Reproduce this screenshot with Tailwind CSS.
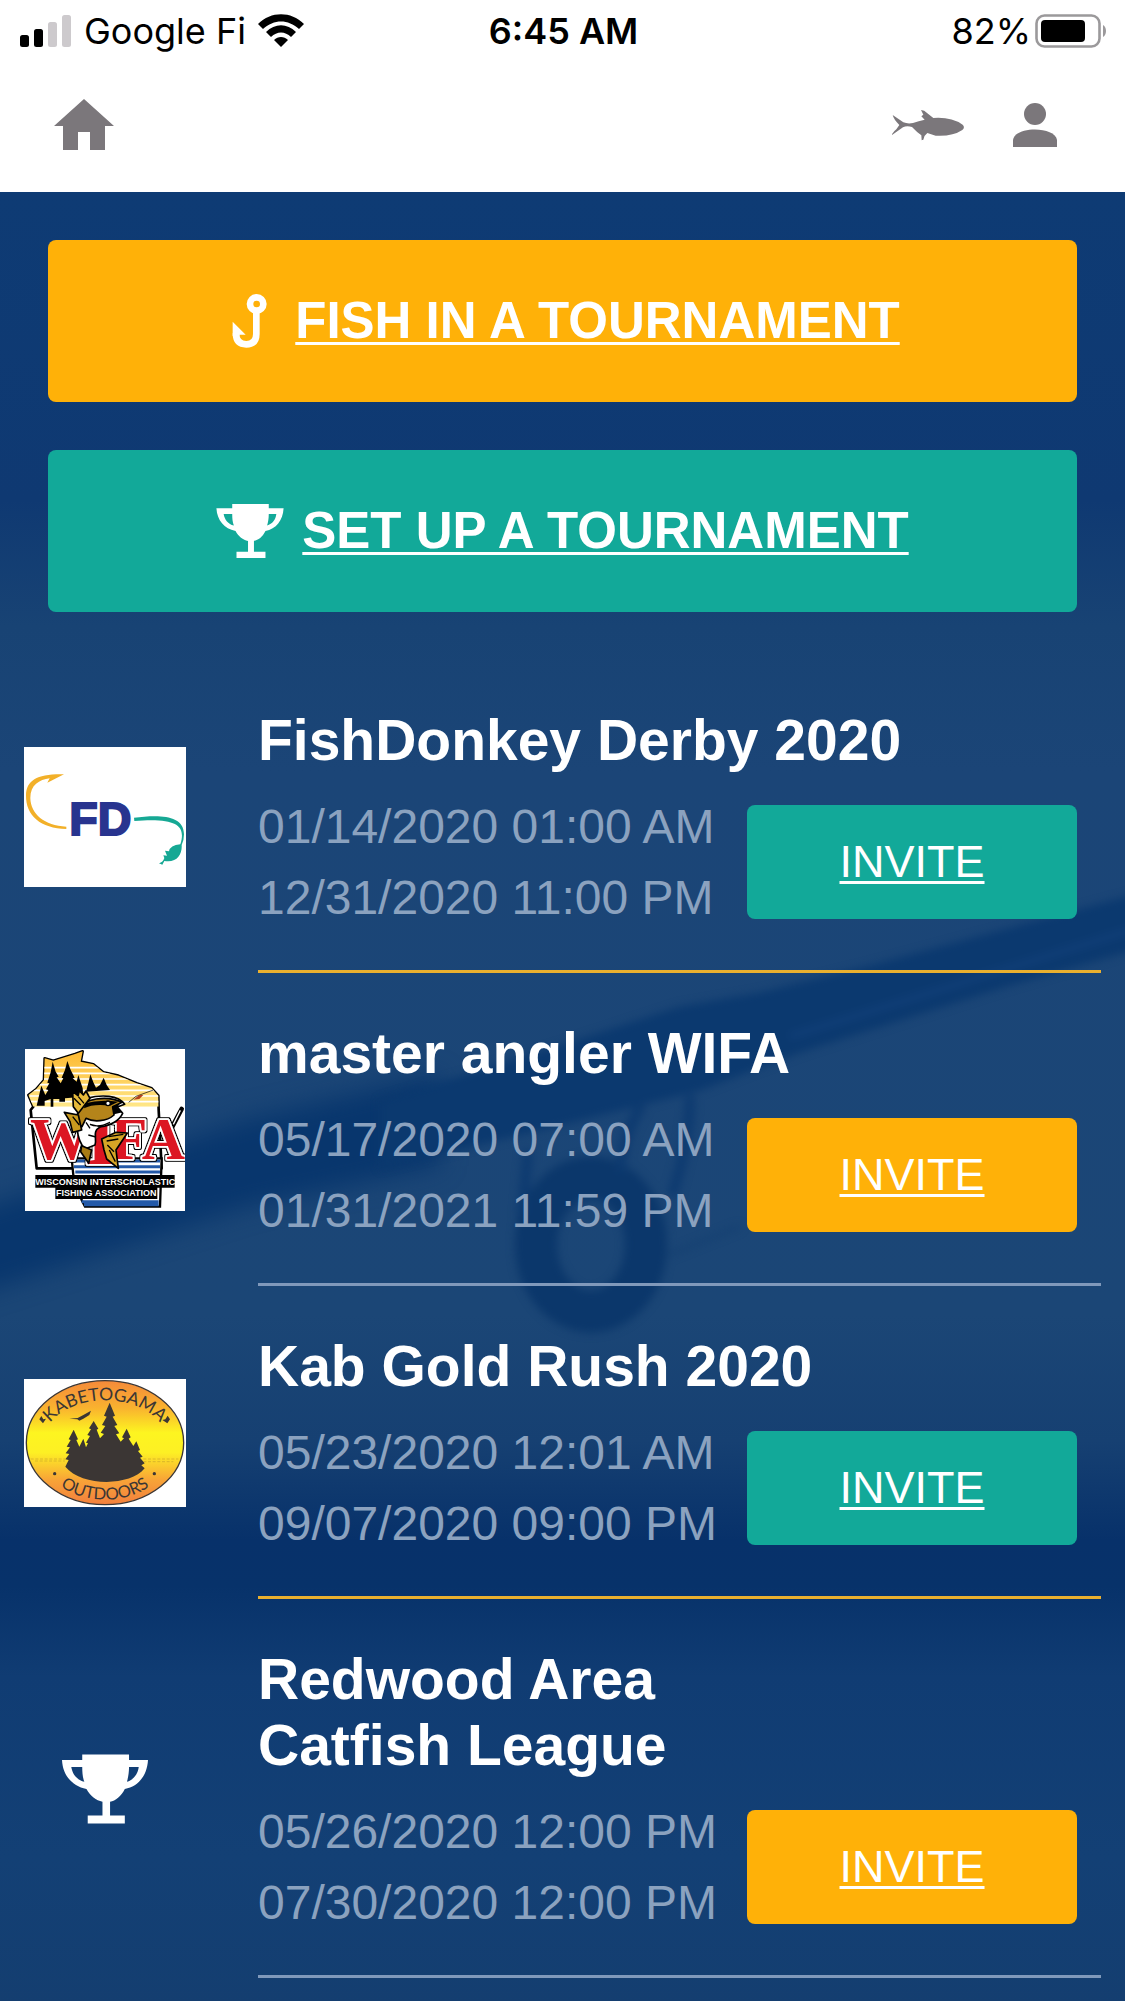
<!DOCTYPE html>
<html lang="en">
<head>
  <meta charset="UTF-8">
  <meta name="viewport" content="width=device-width, initial-scale=1.0">
  <title>Tournaments</title>
  <script src="https://cdn.jsdelivr.net/npm/@tailwindcss/browser@4"></script>
</head>
<body class="min-h-screen bg-[#123f74] font-['Liberation_Sans',Arial,sans-serif]">

  <!-- Shared icons -->
  <svg class="hidden" aria-hidden="true">
    <symbol id="trophy" viewBox="0 0 204 164">
      <path fill="currentColor" fill-rule="evenodd" d="M48 0H159V13H204C202 50 181 76 149 82C140 100 127 110 114 112V145H149V164H61V145H96V112C81 109 67 99 58 82C24 75 2 50 0 13H48ZM22 30C25 48 36 61 53 65C49 55 48 43 48 30ZM182 30H159C159 43 157 55 154 65C170 60 180 47 182 30Z"/>
    </symbol>
  </svg>

  <header class="bg-white">
    <!-- Status bar -->
    <div class="grid grid-cols-3 items-center h-[62px] pl-5 pr-[18px] font-['Inter',sans-serif] text-[36px] leading-none text-black">
      <div class="flex items-center gap-3 whitespace-nowrap">
        <svg class="w-[52px] h-8 shrink-0" viewBox="0 0 52 32">
          <rect x="0" y="20" width="9" height="12" rx="2.5"/>
          <rect x="14" y="14" width="9" height="18" rx="2.5"/>
          <rect x="28" y="7" width="9" height="25" rx="2.5" fill="#cdcacd"/>
          <rect x="42" y="0" width="9" height="32" rx="2.5" fill="#cdcacd"/>
        </svg>
        <span>Google Fi</span>
        <svg class="w-[46px] h-[34px] shrink-0" viewBox="0 0 46 34">
          <path d="M0 10C13-3 33-3 46 10L41 15C30 5 16 5 5 15Z"/>
          <path d="M8 18C17 9 29 9 38 18L33 23C27 17 19 17 13 23Z"/>
          <path d="M16 26C20 22 26 22 30 26L23 33Z"/>
        </svg>
      </div>
      <div class="text-center font-semibold">6:45 AM</div>
      <div class="flex items-center justify-end gap-1">
        <span>82%</span>
        <svg class="w-[72px] h-[34px] shrink-0" viewBox="0 0 72 34">
          <rect x="1.5" y="1.5" width="63" height="31" rx="8" fill="none" stroke="#9b999b" stroke-width="2.6"/>
          <rect x="6" y="6" width="44" height="22" rx="4"/>
          <path d="M68 11C72 13 72 21 68 23Z" fill="#9b999b"/>
        </svg>
      </div>
    </div>

    <nav class="flex items-center h-[130px] pl-[54px] pr-[68px] pb-1 text-[#7b777b]">
      <a href="#" aria-label="Home">
        <svg class="w-[60px] h-[52px]" viewBox="0 0 60 52" fill="currentColor">
          <path d="M30 0L60 27H51V51H36V33H24V51H9V27H0Z"/>
        </svg>
      </a>
      <a href="#" aria-label="Catches" class="ml-auto mr-12">
        <svg class="w-[74px] h-8" viewBox="122 90 218 96" fill="currentColor">
          <path d="M125 108L157 130Q170 135 186 132Q203 126 221 122L211 112L217 107L210 93Q220 93 229 103L247 117Q300 113 335 137Q343 145 334 153Q304 173 254 170L229 162Q220 168 217 182L212 184L211 169Q198 160 183 144Q167 139 156 145L123 168Q122 164 136 151L145 138Q128 121 125 108Z"/>
        </svg>
      </a>
      <a href="#" aria-label="Profile">
        <svg class="w-11 h-11" viewBox="0 0 44 44" fill="currentColor">
          <circle cx="22" cy="11" r="11"/>
          <path d="M0 44V37C2 23 42 23 44 37V44Z"/>
        </svg>
      </a>
    </nav>
  </header>

  <main class="relative isolate pb-6">
    <!-- Fishing rod backdrop -->
    <svg class="absolute inset-0 -z-10 w-full h-full" viewBox="0 192 1125 1809" preserveAspectRatio="none" aria-hidden="true">
      <defs>
        <linearGradient id="water" x1="0" y1="0" x2="0" y2="1">
          <stop offset="0" stop-color="#0e3b74"/>
          <stop offset="0.17" stop-color="#0f3972"/>
          <stop offset="0.24" stop-color="#184374"/>
          <stop offset="0.32" stop-color="#1b4577"/>
          <stop offset="0.62" stop-color="#1b4676"/>
          <stop offset="0.69" stop-color="#164072"/>
          <stop offset="0.745" stop-color="#07316a"/>
          <stop offset="0.77" stop-color="#07326a"/>
          <stop offset="0.82" stop-color="#103c73"/>
          <stop offset="0.92" stop-color="#134075"/>
          <stop offset="1" stop-color="#143e70"/>
        </linearGradient>
        <filter id="soft" x="-10%" y="-10%" width="120%" height="120%" color-interpolation-filters="sRGB"><feGaussianBlur stdDeviation="4"/></filter>
        <filter id="softer" x="-10%" y="-30%" width="120%" height="160%" color-interpolation-filters="sRGB"><feGaussianBlur stdDeviation="12"/></filter>
      </defs>
      <rect x="0" y="192" width="1125" height="1809" fill="url(#water)"/>
      <path d="M-60 1222L250 1118L440 1074V1165L250 1205L-60 1305Z" fill="#08366d" filter="url(#softer)"/>
      <g filter="url(#soft)">
        <path d="M380 1100L560 1045L680 1006L760 992L870 965L1000 930L1150 890V945L1010 985L800 1052L700 1090L560 1125L380 1168Z" fill="#0b396f"/>
        <path d="M790 1036L1130 930" stroke="#12407a" stroke-width="5"/>
        <ellipse cx="591" cy="1244" rx="55" ry="67" fill="none" stroke="#0b376b" stroke-width="42"/>
        <path d="M528 1150L522 1215M642 1105Q624 1130 620 1172M690 1095Q690 1140 672 1195" fill="none" stroke="#0d3a70" stroke-width="10"/>
        <path d="M664 1256L740 1226" stroke="#123e70" stroke-width="3"/>
      </g>
    </svg>

    <div class="flex flex-col gap-12 p-12">
      <a href="#" class="flex items-center justify-center gap-5 h-[162px] rounded-lg bg-[#ffb108] text-white text-[51px] font-bold">
        <svg class="w-[50px] h-[54px]" viewBox="76 192 150 162" fill="none" stroke="currentColor">
          <circle cx="171" cy="222" r="20" stroke-width="20"/>
          <path d="M170 245V312Q170 343 140 343Q109 343 109 310" stroke-width="20"/>
          <path d="M99 275L138 314H119V325L99 318Z" fill="currentColor" stroke="none"/>
        </svg>
        <span class="underline decoration-3 underline-offset-4">FISH IN A TOURNAMENT</span>
      </a>
      <a href="#" class="flex items-center justify-center gap-[18px] h-[162px] rounded-lg bg-[#12a999] text-white text-[51px] font-bold">
        <svg class="w-[68px] h-[54px]"><use href="#trophy"/></svg>
        <span class="underline decoration-3 underline-offset-4">SET UP A TOURNAMENT</span>
      </a>
    </div>

    <ul class="px-6">
      <li class="flex items-center gap-[72px]">
        <div class="w-[162px] shrink-0">
          <svg class="w-[162px] h-[140px] bg-white" viewBox="42 51 486 420" role="img" aria-label="FishDonkey">
            <path d="M162 133L112 158L119 145C88 149 61 165 61 204C62 252 103 287 169 290V297C92 296 47 257 48 196C49 150 83 131 162 133Z" fill="#f2b029"/>
            <text x="178" y="316" font-family="Liberation Sans" font-weight="bold" font-size="140" fill="#28348f" stroke="#28348f" stroke-width="6">FD</text>
            <path d="M372 263C440 255 522 251 522 313Q522 331 515 345C517 372 501 400 463 393L457 404L447 400Q459 397 463 384L460 376L471 377L465 362L477 364Q480 346 511 343C529 287 500 263 373 273Z" fill="#16a894"/>
          </svg>
        </div>
        <div class="grow pt-[47px] pb-[37px] pr-6 border-b-3 border-[#eab02f]">
          <h2 class="text-white text-[57px] leading-[66px] font-bold">FishDonkey Derby 2020</h2>
          <div class="flex items-center justify-between mt-[18px]">
            <p class="text-[#8ba2bf] text-[48px] leading-[71px] whitespace-nowrap">01/14/2020 01:00 AM<br>12/31/2020 11:00 PM</p>
            <button type="button" class="w-[330px] h-[114px] rounded-lg bg-[#12a999] text-white text-[45px] underline decoration-3 underline-offset-4">INVITE</button>
          </div>
        </div>
      </li>

      <li class="flex items-center gap-[72px]">
        <div class="w-[162px] shrink-0">
          <svg class="w-40 h-[162px] mx-auto bg-white" viewBox="45 42 480 486" role="img" aria-label="Wisconsin Interscholastic Fishing Association">
            <defs>
              <linearGradient id="sunset" x1="0" y1="0" x2="0" y2="1">
                <stop offset="0" stop-color="#fdb72c"/><stop offset="1" stop-color="#ffe98c"/>
              </linearGradient>
              <clipPath id="state"><path d="M104 70L130 77L195 57L218 49L212 80L250 88L280 112L325 122L380 145L425 160L445 182L446 215H70L55 180L78 163L102 135Z"/></clipPath>
              <filter id="outline" x="-10%" y="-10%" width="120%" height="120%">
                <feMorphology in="SourceAlpha" operator="dilate" radius="2" result="edge"/>
                <feMerge><feMergeNode in="edge"/><feMergeNode in="SourceGraphic"/></feMerge>
              </filter>
            </defs>
            <!-- state outline and striped sky -->
            <path d="M104 70L130 77L195 57L218 49L212 80L250 88L280 112L325 122L380 145L425 160L445 182L446 225L455 400H80L62 225L70 215L55 180L78 163L102 135Z" fill="#fff" stroke="#000" stroke-width="8" stroke-linejoin="round"/>
            <g clip-path="url(#state)">
              <rect x="45" y="42" width="420" height="180" fill="url(#sunset)"/>
              <path d="M60 98H460M60 115H460M60 132H460M60 149H460M60 166H460M60 183H460M60 200H460" stroke="#fff" stroke-width="5"/>
            </g>
            <!-- trees -->
            <path d="M128 80L137 110L146 125L140 127L152 145L160 130L155 128L165 105L172 78L182 105L194 128L188 130L200 140L205 120L212 142L218 160L220 185L165 190V200H148V192H130V215H122V192L104 198V212H80L88 178L94 152L106 180L115 165L108 163L118 145L112 143L122 112ZM241 118L250 142L258 158L270 150L281 128L290 150L300 165L228 170L236 140Z"/>
            <!-- lake stripes -->
            <path d="M185 370H455L450 515H225L215 495L190 420Z" fill="#fff" stroke="#000" stroke-width="7"/>
            <path d="M190 378H450M192 395H450M196 411H450M215 500H446M222 509H446" stroke="#2359a8" stroke-width="9"/>
            <path d="M515 222L487 275" stroke="#000" stroke-width="14" stroke-linecap="round"/>
            <path d="M511 226L490 268" stroke="#fff" stroke-width="4"/>
            <g font-family="Liberation Serif" font-weight="bold" fill="#dc1420" stroke="#fff" stroke-width="11" stroke-linejoin="round" paint-order="stroke" filter="url(#outline)">
              <text x="60" y="372" font-size="180">W</text>
              <text x="224" y="388" font-size="250">I</text>
              <text x="302" y="372" font-size="180">F</text>
              <text x="395" y="372" font-size="180">A</text>
            </g>
            <!-- walleye -->
            <g stroke="#000" stroke-width="5" stroke-linejoin="round">
              <path d="M230 190C275 178 325 180 344 208L322 216L338 235C325 262 295 272 270 276C245 290 262 310 255 330L225 342C195 310 200 260 205 225Z" fill="#fff"/>
              <path d="M205 225C220 190 290 180 336 202L308 216L312 240C290 260 250 262 228 250L216 275C200 265 200 240 205 225Z" fill="#b4841a"/>
              <path d="M188 170L204 182L208 167L220 180L228 168L240 190L205 235L190 215Z" fill="#e5b93a"/>
              <path d="M163 232L205 240L215 285L188 292L180 260Z" fill="#c99a1e"/>
              <path d="M275 312L318 292L352 294L318 345L325 400L290 372L282 345Z" fill="#d6a526"/>
              <path d="M215 332L245 345L236 385L212 350Z" fill="#a87c14"/>
            </g>
            <path d="M225 205Q270 192 325 200L300 212Q250 205 222 220Z"/>
            <path d="M240 268Q265 280 300 262L270 275Z" stroke="#000" stroke-width="4"/>
            <circle cx="294" cy="205" r="7" fill="#fff" stroke="#000" stroke-width="4"/>
            <path d="M306 214L330 204L322 218L338 232L312 238Z"/>
            <path d="M228 262L240 280M235 300L258 306M296 305L340 298M290 318L325 312M292 330L312 350M298 345L316 380M188 245L208 270M192 190L212 210M205 185L222 205" stroke="#000" stroke-width="4"/>
            <!-- lure -->
            <path d="M356 202L378 184L430 165" stroke="#000" stroke-width="2" fill="none"/>
            <path d="M370 194L388 180L400 180L388 192Z" fill="#b3421e"/>
            <path d="M76 420H494V458H442V492H136V458H76Z"/>
            <g font-family="Liberation Sans" font-weight="bold" fill="#fff" text-anchor="middle">
              <text x="286" y="449" font-size="27">WISCONSIN INTERSCHOLASTIC</text>
              <text x="289" y="484" font-size="27">FISHING ASSOCIATION</text>
            </g>
          </svg>
        </div>
        <div class="grow pt-[47px] pb-[37px] pr-6 border-b-3 border-[#8099bb]">
          <h2 class="text-white text-[57px] leading-[66px] font-bold">master angler WIFA</h2>
          <div class="flex items-center justify-between mt-[18px]">
            <p class="text-[#8ba2bf] text-[48px] leading-[71px] whitespace-nowrap">05/17/2020 07:00 AM<br>01/31/2021 11:59 PM</p>
            <button type="button" class="w-[330px] h-[114px] rounded-lg bg-[#ffb108] text-white text-[45px] underline decoration-3 underline-offset-4">INVITE</button>
          </div>
        </div>
      </li>

      <li class="flex items-center gap-[72px]">
        <div class="w-[162px] shrink-0">
          <svg class="w-[162px] h-32 bg-white" viewBox="42 57 486 384" role="img" aria-label="Kabetogama Outdoors">
            <defs>
              <linearGradient id="dusk" x1="0" y1="0" x2="0" y2="1">
                <stop offset="0" stop-color="#f58a3a"/><stop offset="0.22" stop-color="#f9b22f"/>
                <stop offset="0.42" stop-color="#fdf520"/><stop offset="0.58" stop-color="#fdf024"/>
                <stop offset="0.8" stop-color="#f8a437"/><stop offset="1" stop-color="#f27f3e"/>
              </linearGradient>
              <path id="arcTop" d="M93 258A192 137 0 0 1 477 258"/>
              <path id="arcBottom" d="M81 258A204 161 0 0 0 489 258"/>
            </defs>
            <ellipse cx="285" cy="248" rx="236" ry="186" fill="url(#dusk)" stroke="#3b3634" stroke-width="4"/>
            <g font-family="Lato, sans-serif" fill="#3b3634" text-anchor="middle">
              <text font-size="53"><textPath href="#arcTop" startOffset="50%">KABETOGAMA</textPath></text>
              <text font-size="50"><textPath href="#arcBottom" startOffset="50%">OUTDOORS</textPath></text>
            </g>
            <g fill="#3b3634">
              <circle cx="134" cy="341" r="5"/><circle cx="433" cy="341" r="5"/>
              <path d="M88 178L94 168L100 178L108 176L99 190ZM457 180L466 178L473 167L480 178L472 190Z"/>
              <path d="M178 176L203 174L220 165L243 152L238 165L220 176L208 182L202 178Z"/>
              <path d="M166 320L176 300L166 298L178 282L167 280L180 262L170 260L182 240L176 238L191 209L204 238L199 240L208 260L220 236L228 262L234 250L228 248L240 228L232 225L243 208L237 205L251 183L265 206L260 209L270 235L282 222L272 218L286 198L276 195L290 170L282 167L299 128L315 167L308 170L322 195L313 198L328 220L318 223L332 245L342 235L336 232L350 206L362 232L356 236L370 258L379 244L390 270L384 273L398 290L390 293L404 310L394 316L404 325C360 380 215 380 166 320Z"/>
            </g>
            <path d="M62 297H165M400 297H505M75 303H165M400 305H490" stroke="#b9942a" stroke-width="1.5" stroke-dasharray="9 5"/>
          </svg>
        </div>
        <div class="grow pt-[47px] pb-[37px] pr-6 border-b-3 border-[#eab02f]">
          <h2 class="text-white text-[57px] leading-[66px] font-bold">Kab Gold Rush 2020</h2>
          <div class="flex items-center justify-between mt-[18px]">
            <p class="text-[#8ba2bf] text-[48px] leading-[71px] whitespace-nowrap">05/23/2020 12:01 AM<br>09/07/2020 09:00 PM</p>
            <button type="button" class="w-[330px] h-[114px] rounded-lg bg-[#12a999] text-white text-[45px] underline decoration-3 underline-offset-4">INVITE</button>
          </div>
        </div>
      </li>

      <li class="flex items-center gap-[72px]">
        <div class="w-[162px] shrink-0">
          <svg class="w-[86px] h-[70px] mx-auto text-white"><use href="#trophy"/></svg>
        </div>
        <div class="grow pt-[47px] pb-[37px] pr-6 border-b-3 border-[#8099bb]">
          <h2 class="text-white text-[57px] leading-[66px] font-bold">Redwood Area<br>Catfish League</h2>
          <div class="flex items-center justify-between mt-[18px]">
            <p class="text-[#8ba2bf] text-[48px] leading-[71px] whitespace-nowrap">05/26/2020 12:00 PM<br>07/30/2020 12:00 PM</p>
            <button type="button" class="w-[330px] h-[114px] rounded-lg bg-[#ffb108] text-white text-[45px] underline decoration-3 underline-offset-4">INVITE</button>
          </div>
        </div>
      </li>
    </ul>
  </main>
</body>
</html>
